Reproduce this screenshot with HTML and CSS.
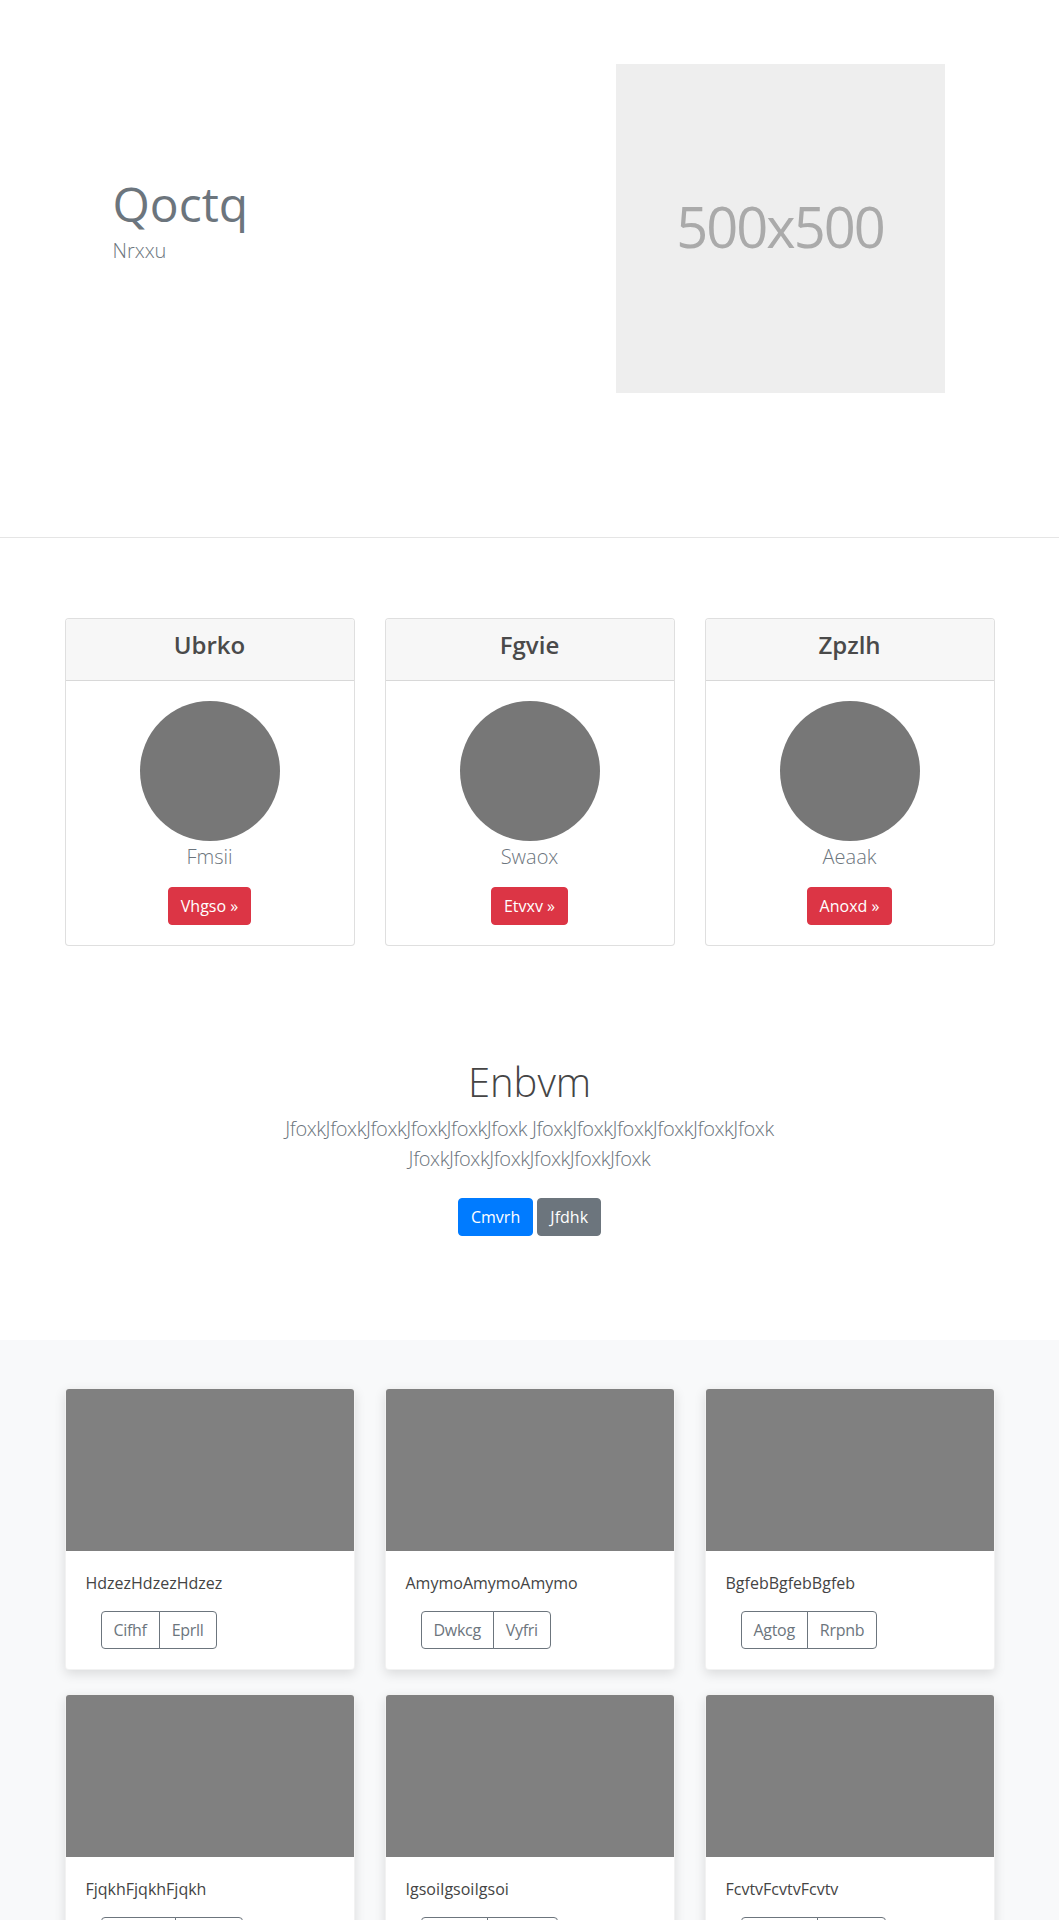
FILE: index.html
```html
<!DOCTYPE html>
<html lang="en">
<head>
<meta charset="utf-8">
<title>Qoctq</title>
<link rel="stylesheet" href="styles.css">
</head>
<body>
<header class="hero">
  <div class="container hero-row">
    <div class="hero-text">
      <h1 class="hero-title">Qoctq</h1>
      <p class="hero-sub">Nrxxu</p>
    </div>
    <div class="hero-media">
      <div class="placeholder">500x500</div>
    </div>
  </div>
</header>

<section class="pricing">
  <div class="container grid3">
    <div class="pcard">
      <div class="pcard-head"><h4 class="pcard-title">Ubrko</h4></div>
      <div class="pcard-body">
        <div class="avatar"></div>
        <p class="pname">Fmsii</p>
        <a class="btn btn-danger" href="#">Vhgso »</a>
      </div>
    </div>
    <div class="pcard">
      <div class="pcard-head"><h4 class="pcard-title">Fgvie</h4></div>
      <div class="pcard-body">
        <div class="avatar"></div>
        <p class="pname">Swaox</p>
        <a class="btn btn-danger" href="#">Etvxv »</a>
      </div>
    </div>
    <div class="pcard">
      <div class="pcard-head"><h4 class="pcard-title">Zpzlh</h4></div>
      <div class="pcard-body">
        <div class="avatar"></div>
        <p class="pname">Aeaak</p>
        <a class="btn btn-danger" href="#">Anoxd »</a>
      </div>
    </div>
  </div>
</section>

<section class="jumbo">
  <div class="jumbo-inner">
    <h1 class="jumbo-title">Enbvm</h1>
    <p class="jumbo-lead">JfoxkJfoxkJfoxkJfoxkJfoxkJfoxk JfoxkJfoxkJfoxkJfoxkJfoxkJfoxk JfoxkJfoxkJfoxkJfoxkJfoxkJfoxk</p>
    <p class="jumbo-actions"><a class="btn btn-primary" href="#">Cmvrh</a> <a class="btn btn-secondary" href="#">Jfdhk</a></p>
  </div>
</section>

<section class="album">
  <div class="container grid3 album-grid">
    <div class="acard">
      <div class="acard-img"></div>
      <div class="acard-body">
        <p class="acard-text">HdzezHdzezHdzez</p>
        <div class="btn-group"><a class="btn btn-outline" href="#">Cifhf</a><a class="btn btn-outline" href="#">Eprll</a></div>
      </div>
    </div>
    <div class="acard">
      <div class="acard-img"></div>
      <div class="acard-body">
        <p class="acard-text">AmymoAmymoAmymo</p>
        <div class="btn-group"><a class="btn btn-outline" href="#">Dwkcg</a><a class="btn btn-outline" href="#">Vyfri</a></div>
      </div>
    </div>
    <div class="acard">
      <div class="acard-img"></div>
      <div class="acard-body">
        <p class="acard-text">BgfebBgfebBgfeb</p>
        <div class="btn-group"><a class="btn btn-outline" href="#">Agtog</a><a class="btn btn-outline" href="#">Rrpnb</a></div>
      </div>
    </div>
    <div class="acard">
      <div class="acard-img"></div>
      <div class="acard-body">
        <p class="acard-text">FjqkhFjqkhFjqkh</p>
        <div class="btn-group"><a class="btn btn-outline" href="#">Uoznw</a><a class="btn btn-outline" href="#">Lzqnk</a></div>
      </div>
    </div>
    <div class="acard">
      <div class="acard-img"></div>
      <div class="acard-body">
        <p class="acard-text">IgsoiIgsoiIgsoi</p>
        <div class="btn-group"><a class="btn btn-outline" href="#">Ktbyd</a><a class="btn btn-outline" href="#">Wlxhe</a></div>
      </div>
    </div>
    <div class="acard">
      <div class="acard-img"></div>
      <div class="acard-body">
        <p class="acard-text">FcvtvFcvtvFcvtv</p>
        <div class="btn-group"><a class="btn btn-outline" href="#">Qrhmo</a><a class="btn btn-outline" href="#">Pxavu</a></div>
      </div>
    </div>
  </div>
</section>
</body>
</html>
```

FILE: styles.css
```css
* { box-sizing: border-box; }

html, body {
  margin: 0;
  padding: 0;
}

body {
  font-family: "Open Sans", "Noto Sans", sans-serif;
  font-size: 16px;
  line-height: 1.5;
  color: #212529;
  background: #fff;
}

.container {
  width: 960px;
  margin: 0 auto;
  padding: 0 15px;
}

/* ---------- hero ---------- */
.hero {
  padding: 64px 0 144px;
  border-bottom: 1px solid #e5e5e5;
}

.hero-row {
  display: flex;
  align-items: center;
}

.hero-text {
  flex: 0 0 465px;
  padding-left: 48px;
}

.hero-title {
  margin: 0 0 4px;
  font-size: 48px;
  font-weight: 400;
  line-height: 1.2;
  color: #6c757d;
}

.hero-sub {
  margin: 0 0 16px;
  font-size: 20px;
  font-weight: 300;
  line-height: 1.5;
  color: #6c757d;
}

.hero-media {
  flex: 1;
  padding-left: 86px;
}

.placeholder {
  width: 329px;
  height: 329px;
  background: #eeeeee;
  color: #aaaaaa;
  display: flex;
  align-items: center;
  justify-content: center;
  font-size: 56px;
  letter-spacing: -2px;
  line-height: 1;
  padding-bottom: 6px;
}

/* ---------- grid ---------- */
.grid3 {
  display: grid;
  grid-template-columns: repeat(3, 290px);
  column-gap: 30px;
}

/* ---------- pricing ---------- */
.pricing {
  padding-top: 80px;
}

.pcard {
  border: 1px solid rgba(0, 0, 0, 0.125);
  border-radius: 4px;
  overflow: hidden;
  background: #fff;
}

.pcard-head {
  background: #f7f7f7;
  border-bottom: 1px solid rgba(0, 0, 0, 0.125);
  padding: 12px 20px;
}

.pcard-title {
  margin: 0 0 8px;
  font-size: 24px;
  font-weight: 600;
  line-height: 1.2;
  text-align: center;
  color: #4a4a4a;
}

.pcard-body {
  padding: 20px;
  text-align: center;
}

.avatar {
  width: 140px;
  height: 140px;
  border-radius: 50%;
  background: #777777;
  margin: 0 auto;
}

.pname {
  margin: 0 0 16px;
  padding-top: 1px;
  font-size: 20px;
  font-weight: 300;
  line-height: 1.45;
  color: #6c757d;
}

/* ---------- buttons ---------- */
.btn {
  display: inline-block;
  font-size: 16px;
  line-height: 1.5;
  padding: 6px 12px;
  border: 1px solid transparent;
  border-radius: 4px;
  text-decoration: none;
  text-align: center;
  vertical-align: middle;
}

.btn-danger {
  background: #dc3545;
  border-color: #dc3545;
  color: #fff;
}

.btn-primary {
  background: #007bff;
  border-color: #007bff;
  color: #fff;
}

.btn-secondary {
  background: #6c757d;
  border-color: #6c757d;
  color: #fff;
}

.btn-outline {
  background: transparent;
  border-color: #6c757d;
  color: #6c757d;
  letter-spacing: -0.3px;
}

.btn-group {
  display: inline-flex;
  margin-left: 15px;
}

.btn-group .btn:first-child {
  border-top-right-radius: 0;
  border-bottom-right-radius: 0;
}

.btn-group .btn + .btn {
  margin-left: -1px;
  border-top-left-radius: 0;
  border-bottom-left-radius: 0;
}

/* ---------- jumbotron ---------- */
.jumbo {
  padding: 112px 0 96px;
  text-align: center;
}

.jumbo-inner {
  max-width: 640px;
  margin: 0 auto;
  padding: 0 15px;
}

.jumbo-title {
  margin: 0 0 8px;
  font-size: 40px;
  font-weight: 300;
  line-height: 1.2;
  color: #454545;
}

.jumbo-lead {
  margin: 0 0 16px;
  font-size: 20px;
  font-weight: 300;
  line-height: 1.5;
  letter-spacing: -0.4px;
  color: #6c757d;
}

.jumbo-actions {
  margin: 0;
}

.jumbo-actions .btn {
  margin: 8px 0;
}

/* ---------- album ---------- */
.album {
  background: #f8f9fa;
  padding: 48px 0;
}

.album-grid {
  row-gap: 24px;
}

.acard {
  background: #fff;
  border: 1px solid rgba(0, 0, 0, 0.05);
  border-radius: 4px;
  overflow: hidden;
  box-shadow: 0 4px 12px rgba(0, 0, 0, 0.12);
}

.acard-img {
  height: 162px;
  background: #808080;
}

.acard-body {
  padding: 20px;
}

.acard-text {
  margin: 0 0 16px;
  color: #444;
}
```
